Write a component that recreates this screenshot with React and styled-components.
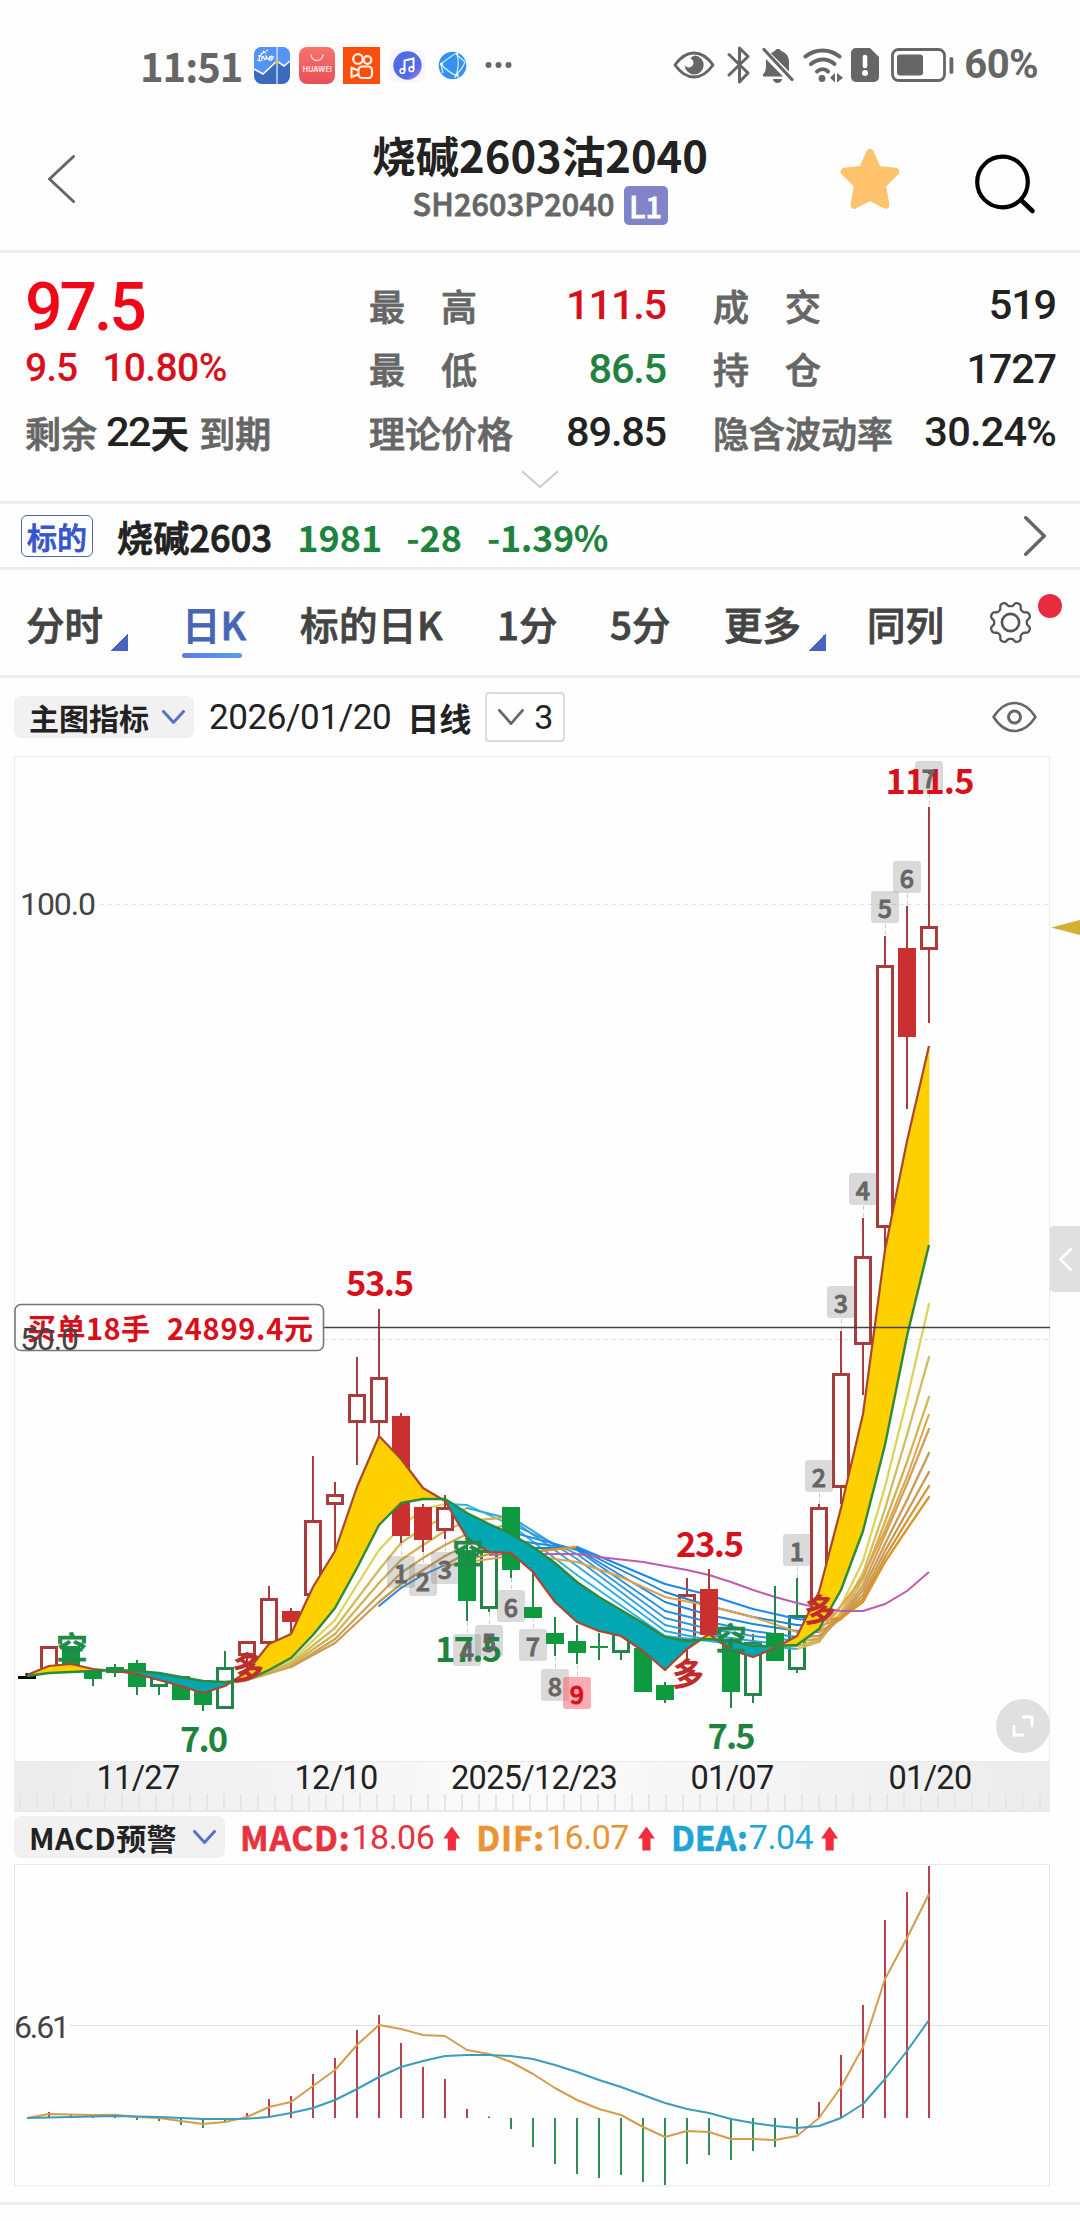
import React from "react";
import styled, { createGlobalStyle } from "styled-components";

const CJK = '"Noto Sans CJK SC", "Noto Sans", sans-serif';
const NUM = 'Roboto, "Noto Sans CJK SC", sans-serif';
const RED = "#d8101c";
const GREEN = "#1f8340";
const INK = "#222";
const GREY = "#666";
const RULE = "#ededed";

const Global = createGlobalStyle`
  * { box-sizing: border-box; }
  body { margin: 0; background: #fff; }
  svg { display: block; flex: none; }
`;

const Page = styled.div`
  width: 1080px;
  height: 2221px;
  overflow: hidden;
  background: #fefefe;
  color: ${INK};
  font-family: ${CJK};
  display: flex;
  flex-direction: column;
`;

const Text = styled.span`
  font-family: ${(p) => (p.$num ? NUM : CJK)};
  font-size: ${(p) => p.$size}px;
  font-weight: ${(p) => p.$weight || 500};
  color: ${(p) => p.$color || INK};
  letter-spacing: ${(p) => p.$track || 0}px;
  margin-left: ${(p) => p.$left || 0}px;
  -webkit-text-stroke: ${(p) => p.$stroke ?? (p.$num || p.$weight ? 0 : 0.8)}px currentColor;
  line-height: 1;
  white-space: pre;
`;

/* ---------- status bar ---------- */
const StatusBar = styled.div`
  height: 130px;
  display: flex;
  align-items: center;
  justify-content: space-between;
  padding: 0 42px 0 140px;
  flex: none;
`;
const StatusGroup = styled.div`
  display: flex;
  align-items: center;
`;
const AppIcons = styled.div`
  display: flex;
  align-items: center;
  gap: 8.5px;
  margin-left: 12px;
  & > svg:last-child { margin-left: 5px; }
`;
const StatusIcons = styled.div`
  display: flex;
  align-items: center;
  margin-right: 10px;
  & > svg:nth-child(2) { margin-left: 12px; }
  & > svg:nth-child(3) { margin-left: 12px; }
  & > svg:nth-child(4) { margin-left: 9px; }
  & > svg:nth-child(5) { margin-left: 7px; }
  & > svg:nth-child(6) { margin-left: 12px; }
`;

/* ---------- header ---------- */
const Header = styled.header`
  height: 123px;
  flex: none;
  border-bottom: 3px solid ${RULE};
  display: grid;
  grid-template-columns: 320px 1fr 320px;
`;
const BackArea = styled.div`
  padding: 25px 0 0 48px;
`;
const Titles = styled.div`
  display: flex;
  flex-direction: column;
  align-items: center;
`;
const TitleLine = styled.div`
  height: 50px;
  display: flex;
  align-items: center;
`;
const SubLine = styled.div`
  height: 50px;
  display: flex;
  align-items: center;
  gap: 9px;
  & > span:first-child { margin-top: -4px; }
`;
const LevelBadge = styled.span`
  width: 44px;
  height: 39px;
  border-radius: 5px;
  background: #8184c8;
  display: flex;
  align-items: center;
  justify-content: center;
`;
const Actions = styled.div`
  display: flex;
  align-items: flex-start;
  justify-content: flex-end;
  padding: 18px 44px 0 0;
  gap: 73px;
`;

/* ---------- quote ---------- */
const Quote = styled.section`
  height: 251px;
  flex: none;
  border-bottom: 3px solid ${RULE};
  padding: 20px 24px 0 25px;
`;
const QuoteGrid = styled.div`
  display: grid;
  grid-template-columns: 344px 297px 390px;
  grid-template-rows: repeat(3, 63.5px);
`;
const Cell = styled.div`
  display: flex;
  align-items: center;
  justify-content: flex-start;
  padding-top: ${(p) => p.$top || 0}px;
`;
const Pair = styled(Cell)`
  justify-content: space-between;
  padding-left: ${(p) => p.$indent || 0}px;
`;
const MoreRow = styled.div`
  display: flex;
  justify-content: center;
  padding: 7px 1px 0 0;
`;

/* ---------- underlying ---------- */
const Underlying = styled.section`
  height: 66px;
  flex: none;
  border-bottom: 3px solid ${RULE};
  display: flex;
  align-items: center;
  padding: 0 34px 0 21px;
`;
const Tag = styled.span`
  width: 72px;
  height: 42px;
  border: 1.5px solid #4a67b0;
  border-radius: 6px;
  display: flex;
  align-items: center;
  justify-content: center;
`;
const Spacer = styled.div`
  flex: 1;
`;

/* ---------- tabs ---------- */
const Tabs = styled.nav`
  height: 108px;
  flex: none;
  border-bottom: 3px solid ${RULE};
  display: flex;
  align-items: flex-start;
  padding: 34px 18px 0 26px;
`;
const Tab = styled.div`
  width: ${(p) => p.$w}px;
  height: 54px;
  display: flex;
  flex-direction: column;
  align-items: flex-start;
  gap: 8px;
`;
const TabLine = styled.div`
  display: flex;
  align-items: flex-end;
  height: 46px;
  & > span { margin-bottom: 8px; }
`;
const Corner = styled.i`
  width: 18px;
  height: 18px;
  margin: 0 0 -1px 7px;
  background: linear-gradient(135deg, transparent 50%, #4864c0 50%);
`;
const Underline = styled.i`
  width: 60px;
  height: 6px;
  margin: -5px 0 0 0;
  border-radius: 3px;
  background: linear-gradient(90deg, #5b7ce8, #5a9cf2);
`;
const Settings = styled.div`
  display: flex;
  align-items: flex-start;
  margin-top: -3px;
`;
const Dot = styled.i`
  width: 24px;
  height: 24px;
  margin: -7px 0 0 6px;
  border-radius: 50%;
  background: #e82c40;
`;

/* ---------- chart toolbars ---------- */
const ChartBar = styled.div`
  height: 78px;
  flex: none;
  display: flex;
  align-items: center;
  padding: 0 43px 0 14px;
`;
const Pill = styled.div`
  width: ${(p) => p.$w}px;
  height: 42px;
  border-radius: 7px;
  background: #f1f1f1;
  display: flex;
  align-items: center;
  justify-content: space-between;
  padding: 0 9px 0 15px;
`;
const CountBox = styled.div`
  width: 80px;
  height: 50px;
  margin-left: 14px;
  border: 2px solid #dcdcdc;
  border-radius: 4px;
  display: flex;
  align-items: center;
  justify-content: space-between;
  padding: 0 10px 0 11px;
`;

/* ---------- chart ---------- */
const ChartWrap = styled.div`
  position: relative;
  height: 1006px;
  padding-left: 14px;
  flex: none;
`;
const SideHandle = styled.div`
  position: absolute;
  right: 0;
  top: 470px;
  width: 30px;
  height: 66px;
  border-radius: 4px 0 0 4px;
  background: #e0e0e0;
  display: flex;
  align-items: center;
  justify-content: center;
`;
const PriceMarker = styled.i`
  position: absolute;
  right: 0;
  top: 164px;
  width: 29px;
  height: 15px;
  background: #d1b034;
  clip-path: polygon(0 50%, 100% 0, 100% 100%);
`;
const ExpandButton = styled.div`
  position: absolute;
  right: 30px;
  top: 943px;
  width: 54px;
  height: 54px;
  border-radius: 50%;
  background: rgba(222, 222, 222, 0.95);
  display: flex;
  align-items: center;
  justify-content: center;
`;
const Axis = styled.div`
  width: 1036px;
  height: 50px;
  flex: none;
  margin-left: 14px;
  border-bottom: 2px solid #e8e8e8;
  background:
    repeating-linear-gradient(90deg, transparent 0 5px, #e6e6e6 5px 7px, transparent 7px 17px) 0 32px / 100% 16px no-repeat,
    linear-gradient(90deg, #ececec, #fbfbfb 50%, #ececec);
`;
const MacdBar = styled.div`
  height: 52px;
  flex: none;
  display: flex;
  align-items: center;
  padding: 0 14px 2px;
`;
const MacdWrap = styled.div`
  height: 341px;
  flex: none;
  padding-left: 14px;
  border-bottom: 3px solid ${RULE};
`;

/* ---------- icons ---------- */
const Chevron = ({ w, h, color, sw = 3, dir = "down" }) => {
  const p = sw / 2;
  const pts = {
    down: `${p},${p} ${w / 2},${h - p} ${w - p},${p}`,
    left: `${w - p},${p} ${p},${h / 2} ${w - p},${h - p}`,
    right: `${p},${p} ${w - p},${h / 2} ${p},${h - p}`,
  }[dir];
  return (
    <svg width={w} height={h}>
      <polyline points={pts} fill="none" stroke={color} strokeWidth={sw} strokeLinecap="round" strokeLinejoin="round" />
    </svg>
  );
};

const SinaIcon = () => (
  <svg width="36" height="37" viewBox="0 0 36 37">
    <rect width="36" height="37" rx="8" fill="#3a6bbd" />
    <path d="M0 8a8 8 0 0 1 8-8h20a8 8 0 0 1 8 8v6l-6 5-7-5-14 13-9-5z" fill="#5394f8" />
    <path d="M0 22l9 5 14-13 7 5 6-5" fill="none" stroke="#fff" strokeWidth="1.6" />
    <path d="M23 0v37" stroke="#e8eefb" strokeWidth="1.2" />
    <path d="M4 9l3-1-2 3 1 3-3-1M8 9v5M9 9l2 4M12 13V9l3 4 1-4M17 9v5M17 9c4 0 2 3 0 4M7 7l3-2M9 4l3 2M12 4l2-1" fill="none" stroke="#fff" strokeWidth="1.2" />
    <circle cx="23" cy="15" r="1.8" fill="#f0b050" />
  </svg>
);
const StoreIcon = () => (
  <svg width="36" height="37" viewBox="0 0 36 37">
    <defs>
      <linearGradient id="store" x1="0" y1="0" x2="0" y2="1">
        <stop offset="0" stopColor="#f9736c" />
        <stop offset="1" stopColor="#e64f57" />
      </linearGradient>
    </defs>
    <rect width="36" height="37" rx="8" fill="url(#store)" />
    <path d="M12 7.5a6 6 0 0 0 12 0" fill="none" stroke="#fff" strokeOpacity=".75" strokeWidth="1.4" />
    <text x="18.3" y="24.5" textAnchor="middle" textLength="29" fontFamily="Inter, sans-serif" fontWeight="700" fontSize="7" fill="#ffe4e2">HUAWEI</text>
  </svg>
);
const VideoIcon = () => (
  <svg width="37" height="37" viewBox="0 0 37 37">
    <rect width="37" height="37" fill="#fb4d0c" />
    <g fill="none" stroke="#fff3e6" strokeWidth="2.2" strokeLinejoin="round">
      <circle cx="15" cy="12" r="4.8" />
      <circle cx="24.5" cy="13" r="3.8" />
      <rect x="15.5" y="19.5" width="13.5" height="11.5" rx="3.6" />
      <path d="M15.500 23.500l-7-2.800v9.600l7-3" />
    </g>
  </svg>
);
const MusicIcon = () => (
  <svg width="37" height="37" viewBox="0 0 37 37">
    <defs>
      <linearGradient id="music" x1="0" y1="0" x2="1" y2="1">
        <stop offset="0" stopColor="#4a6be6" />
        <stop offset=".7" stopColor="#5a6ae4" />
        <stop offset="1" stopColor="#b58af4" />
      </linearGradient>
    </defs>
    <rect x="1" y="2" width="35" height="33" rx="7" fill="#f6f6fc" />
    <circle cx="18.5" cy="18.5" r="14.2" fill="url(#music)" />
    <path d="M15.5 24V13.500l9-2v10.500" fill="none" stroke="#fff" strokeWidth="2" />
    <circle cx="13.4" cy="24" r="2.3" fill="none" stroke="#fff" strokeWidth="1.6" />
    <circle cx="22.4" cy="22.2" r="2.3" fill="none" stroke="#fff" strokeWidth="1.6" />
  </svg>
);
const BrowserIcon = () => (
  <svg width="37" height="37" viewBox="0 0 37 37">
    <circle cx="18.5" cy="18.5" r="13.8" fill="#3591f0" />
    <g fill="none" stroke="#cdeeff" strokeWidth="1.3">
      <path d="M7 17C11 14 18 8 23 6M7 17c4 5 11 10 18 13M23 6c2 8 2 16-2 25M7 17l2 9M23 8l8 7M31 15c-2 6-5 9-9 13" />
    </g>
    <circle cx="7.5" cy="17" r="1.6" fill="#fff" />
    <circle cx="23" cy="27.5" r="1.6" fill="#fff" />
    <circle cx="23" cy="7" r="1.3" fill="#fff" />
  </svg>
);
const DotsIcon = () => (
  <svg width="27" height="8">
    {[3.5, 13.5, 23.5].map((x) => (
      <circle key={x} cx={x} cy="4" r="3" fill={GREY} />
    ))}
  </svg>
);

const EyeCareIcon = () => (
  <svg width="42" height="30" viewBox="0 0 42 30">
    <path d="M2 15C8 6.500 14.500 3 21 3s13 3.500 19 12c-6 8.500-12.500 12-19 12S8 23.500 2 15z" fill="none" stroke={GREY} strokeWidth="3" strokeLinejoin="round" />
    <path d="M22 5.500a9.500 9.500 0 1 1-10.300 9.500c2 3.600 7.600 3 8.600-1 .6-3-1-5-3-5.500a9 9 0 0 1 4.700-3z" fill={GREY} />
  </svg>
);
const BluetoothIcon = () => (
  <svg width="23" height="38" viewBox="0 0 23 38">
    <path d="M2 8.500l19 18.500-8.500 9V2l8.500 8.500L2 29" fill="none" stroke={GREY} strokeWidth="3" strokeLinejoin="round" strokeLinecap="round" />
  </svg>
);
const MuteIcon = () => (
  <svg width="32" height="36" viewBox="0 0 32 36">
    <path d="M4 12l17 17.500H1v-2c2.500-2.500 3-5 3-9z" fill={GREY} />
    <path d="M9 6.500C10.500 5 12 4.200 13 4c.3-2.600 5.700-2.600 6 0 4.500 1.300 8 5 8 10.500v10z" fill={GREY} />
    <path d="M2 2.500l28 30" stroke={GREY} strokeWidth="3.200" strokeLinecap="round" />
    <path d="M11 32h9a4.500 4 0 0 1-9 0z" fill={GREY} />
  </svg>
);
const WifiIcon = () => (
  <svg width="41" height="35" viewBox="0 0 41 35">
    <g fill="none" stroke={GREY} strokeWidth="4" strokeLinecap="round">
      <path d="M2.500 8.500c10-8 24-8 34 0" />
      <path d="M8 16c7.500-6 16.500-6 23.500 0" />
      <path d="M14 23.500c3.500-3 8-3 11 0" />
    </g>
    <circle cx="19" cy="30.500" r="3.400" fill={GREY} />
    <path d="M32 25v9.500l-5-4.700zM34 25v9.500l6-4.700z" fill={GREY} />
  </svg>
);
const SimIcon = () => (
  <svg width="28" height="34" viewBox="0 0 28 34">
    <path d="M5 0h14l9 9v20a5 5 0 0 1-5 5H5a5 5 0 0 1-5-5V5a5 5 0 0 1 5-5z" fill={GREY} />
    <path d="M14 9v9" stroke="#fff" strokeWidth="4.600" strokeLinecap="round" />
    <circle cx="14" cy="25" r="3" fill="#fff" />
  </svg>
);
const BatteryIcon = () => (
  <svg width="63" height="34" viewBox="0 0 63 34">
    <rect x="1.500" y="1.500" width="52" height="31" rx="6" fill="none" stroke={GREY} strokeWidth="2.800" />
    <rect x="6" y="6.500" width="26" height="21" rx="3" fill={GREY} />
    <rect x="58.500" y="9" width="3.800" height="17" rx="1.900" fill={GREY} />
  </svg>
);
const StarIcon = () => (
  <svg width="62" height="62" viewBox="0 0 62 62">
    <path d="M31 5l7.300 16.600 18 2.100-13.300 13.100 3.400 20L31 48.700 15.600 56.800l3.400-20L5.700 23.700l18-2.100z" fill="#ffc26d" stroke="#ffc26d" strokeWidth="8" strokeLinejoin="round" />
  </svg>
);
const SearchIcon = () => (
  <svg width="62" height="68" viewBox="0 0 62 68">
    <circle cx="28.500" cy="34" r="25.300" fill="none" stroke="#000" strokeWidth="4.200" />
    <path d="M47 52l11.500 11" stroke="#000" strokeWidth="4.600" strokeLinecap="round" />
  </svg>
);
const GearIcon = () => {
  const pts = [];
  for (let a = 0; a < 360; a += 3) {
    const r = 18.4 + 2.2 * Math.tanh(1.8 * Math.cos(((a - 22.5) * 8 * Math.PI) / 180));
    const t = (a * Math.PI) / 180;
    pts.push(`${(21.5 + r * Math.cos(t)).toFixed(2)},${(21.5 + r * Math.sin(t)).toFixed(2)}`);
  }
  return (
    <svg width="43" height="43" overflow="visible">
      <polygon points={pts.join(" ")} fill="none" stroke="#555" strokeWidth="2.300" strokeLinejoin="round" />
      <circle cx="21.500" cy="21.500" r="8.600" fill="none" stroke="#555" strokeWidth="2.600" />
    </svg>
  );
};
const EyeIcon = () => (
  <svg width="45" height="32" viewBox="0 0 45 32">
    <path d="M1.500 16C8 6 15 2 22.500 2S37 6 43.500 16C37 26 30 30 22.500 30S8 26 1.500 16z" fill="none" stroke={GREY} strokeWidth="2.500" strokeLinejoin="round" />
    <circle cx="22.500" cy="16" r="6" fill="none" stroke={GREY} strokeWidth="3" />
  </svg>
);
const ExpandIcon = () => (
  <svg width="22" height="22" viewBox="0 0 22 22">
    <path d="M10 2h10v10M2 10v10h10" fill="none" stroke="#fff" strokeWidth="2.800" />
  </svg>
);
const UpArrow = styled.i`
  width: 17px;
  height: 24px;
  margin: 3px 0 0 ${(p) => p.$left}px;
  background: #f32b3c;
  clip-path: polygon(50% 0, 100% 50%, 74% 50%, 74% 100%, 26% 100%, 26% 50%, 0 50%);
`;

/* ---------- chart data ---------- */
const X = (i) => 27 + 22 * i;

// [index, kind, high, top, bottom, low]; r/g = colour, f = filled, h = hollow
const CANDLES = [
  [1, "rh", 1646, 1646, 1672, 1672],
  [2, "gf", 1646, 1646, 1673, 1673],
  [3, "gf", 1670, 1670, 1679, 1686],
  [4, "gf", 1664, 1667, 1673, 1677],
  [5, "gf", 1660, 1663, 1687, 1695],
  [6, "gh", 1677, 1677, 1687, 1695],
  [7, "gf", 1676, 1676, 1700, 1700],
  [8, "gf", 1683, 1683, 1705, 1711],
  [9, "gh", 1651, 1667, 1709, 1709],
  [10, "rh", 1641, 1641, 1656, 1673],
  [11, "rh", 1586, 1598, 1644, 1644],
  [12, "rf", 1608, 1611, 1622, 1633],
  [13, "rh", 1456, 1520, 1596, 1596],
  [14, "rh", 1482, 1494, 1505, 1550],
  [15, "rh", 1357, 1394, 1423, 1465],
  [16, "rh", 1309, 1377, 1423, 1437],
  [17, "rf", 1413, 1416, 1536, 1543],
  [18, "rf", 1504, 1507, 1540, 1552],
  [19, "rh", 1495, 1507, 1531, 1539],
  [20, "gf", 1534, 1550, 1601, 1621],
  [21, "gh", 1550, 1550, 1609, 1612],
  [22, "gf", 1507, 1507, 1570, 1578],
  [23, "gf", 1572, 1607, 1618, 1618],
  [24, "gf", 1617, 1633, 1644, 1656],
  [25, "gf", 1625, 1641, 1653, 1664],
  [26, "gf", 1633, 1646, 1648, 1660],
  [27, "gh", 1630, 1630, 1653, 1660],
  [28, "gf", 1648, 1648, 1692, 1692],
  [29, "gf", 1682, 1685, 1700, 1703],
  [30, "rh", 1578, 1594, 1641, 1660],
  [31, "rf", 1569, 1589, 1635, 1635],
  [32, "gf", 1638, 1640, 1692, 1708],
  [33, "gh", 1634, 1642, 1696, 1703],
  [34, "gf", 1586, 1633, 1661, 1661],
  [35, "gh", 1578, 1615, 1670, 1673],
  [36, "rh", 1504, 1507, 1610, 1610],
  [37, "rh", 1331, 1373, 1488, 1504],
  [38, "rh", 1218, 1256, 1345, 1395],
  [39, "rh", 936, 965, 1228, 1248],
  [40, "rf", 906, 948, 1037, 1109],
  [41, "rh", 807, 926, 950, 1023],
];
const FAST = [1675, 1666, 1664, 1669, 1671, 1674, 1680, 1686, 1693, 1686, 1672, 1644, 1634, 1587, 1551, 1487, 1436, 1459, 1488, 1501, 1538, 1552, 1553, 1572, 1602, 1622, 1631, 1636, 1651, 1670, 1649, 1634, 1650, 1657, 1648, 1636, 1592, 1508, 1414, 1250, 1141, 1046];
const SLOW = [1676, 1673, 1672, 1671, 1670, 1671, 1673, 1677, 1681, 1682, 1680, 1670, 1658, 1635, 1608, 1568, 1525, 1503, 1499, 1499, 1513, 1524, 1534, 1547, 1563, 1582, 1597, 1610, 1623, 1637, 1641, 1639, 1641, 1646, 1646, 1645, 1629, 1590, 1531, 1445, 1336, 1245];

// indices shared by the fan of slower averages
const KEYS = [10, 12, 14, 16, 17, 18, 19, 20, 22, 25, 29, 31, 33, 35, 36, 37, 38, 39, 40, 41];
const FAN = [
  [1680, 1661, 1620, 1550, 1527, 1509, 1504, 1505, 1525, 1575, 1636, 1641, 1647, 1646, 1640, 1606, 1561, 1487, 1399, 1304],
  [1680, 1663, 1628, 1570, 1543, 1528, 1517, 1508, 1519, 1566, 1631, 1640, 1645, 1649, 1642, 1612, 1573, 1509, 1435, 1357],
  [1680, 1665, 1634, 1583, 1560, 1545, 1531, 1521, 1517, 1559, 1625, 1635, 1641, 1646, 1641, 1615, 1579, 1522, 1462, 1397],
  [1680, 1667, 1639, 1595, 1573, 1558, 1545, 1534, 1524, 1554, 1618, 1629, 1636, 1641, 1639, 1617, 1585, 1535, 1484, 1429],
  [null, 1667, 1643, 1602, 1584, 1570, 1556, 1545, 1532, 1550, 1611, 1622, 1631, 1637, 1636, 1618, 1590, 1544, 1500, 1453],
  [null, null, null, 1606, 1588, 1575, 1565, 1553, 1540, 1549, 1602, 1615, 1624, 1631, 1632, 1619, 1595, 1551, 1512, 1472],
  [null, null, null, null, null, null, 1567, 1560, 1548, 1548, 1592, 1606, 1617, 1625, 1626, 1619, 1599, 1557, 1521, 1486],
  [null, null, null, null, null, null, null, null, 1554, 1547, 1584, 1595, 1609, 1619, 1621, 1618, 1602, 1562, 1529, 1497],
];
const WARM = ["#dcd45a", "#d4bb5c", "#d2b350", "#cfa357", "#c99c55", "#c99a4c", "#cf9638", "#dd9428"];
const COOL = ["#2bb4dc", "#2cabdc", "#34a2da", "#3499d6", "#2590e0", "#2088de", "#1f80d4", "#1a88ee"];
const ORANGE = [[20, 1562], [22, 1556], [23, 1556], [25, 1562], [27, 1577], [29, 1597], [31, 1606], [33, 1617], [35, 1632], [36, 1631], [37, 1606], [38, 1577], [39, 1530], [40, 1477], [41, 1414]];
const LONG = [[21, 1555], [22, 1554], [25, 1554], [26, 1557], [28, 1562], [29, 1566], [30, 1570], [31, 1575], [32, 1582], [33, 1590], [34, 1597], [35, 1603], [36, 1608], [37, 1611], [38, 1611], [39, 1604], [40, 1591], [41, 1572]];

const BADGES = [
  [17, 1556, 1], [18, 1564, 2], [19, 1552, 3], [20, 1634, 4], [21, 1625, 5], [22, 1590, 6], [23, 1629, 7], [24, 1669, 8], [25, 1677, 9],
  [35, 1534, 1], [36, 1460, 2], [37, 1286, 3], [38, 1173, 4], [39, 891, 5], [40, 861, 6], [41, 761, 7],
];
const PEAKS = [
  [380, 1296, "53.5", 66, RED], [204, 1752, "7.0", 46, GREEN], [468.5, 1662, "17.5", 65, GREEN],
  [710, 1557, "23.5", 66, RED], [731.5, 1749, "7.5", 46, GREEN], [930, 794, "111.5", 87, RED],
];
const SIGNALS = [
  [72, 1659, "空"], [468, 1564, "空"], [731, 1650, "空"], [248, 1679, "多"], [688, 1685, "多"], [820, 1621, "多"],
];

const poly = (arr) => arr.map((y, i) => `${X(i)},${y}`).join(" ");

function Ribbon() {
  const out = [];
  for (let i = 0; i < FAST.length - 1; i++) {
    const a = FAST[i] - SLOW[i];
    const b = FAST[i + 1] - SLOW[i + 1];
    const color = (d) => (d < 0 ? "#ffd000" : "#02a7b2");
    if (a * b < 0) {
      const t = a / (a - b);
      const cx = X(i) + 22 * t;
      const cy = FAST[i] + (FAST[i + 1] - FAST[i]) * t;
      out.push([`${X(i)},${FAST[i]} ${cx},${cy} ${X(i)},${SLOW[i]}`, color(a)]);
      out.push([`${X(i + 1)},${FAST[i + 1]} ${cx},${cy} ${X(i + 1)},${SLOW[i + 1]}`, color(b)]);
    } else {
      out.push([`${X(i)},${FAST[i]} ${X(i + 1)},${FAST[i + 1]} ${X(i + 1)},${SLOW[i + 1]} ${X(i)},${SLOW[i]}`, color(a + b)]);
    }
  }
  return out.map(([p, c], k) => <polygon key={k} points={p} fill={c} stroke={c} strokeWidth="0.600" />);
}

function Fan() {
  const out = [];
  FAN.forEach((row, n) => {
    for (let k = 0; k < KEYS.length - 1; k++) {
      if (row[k] == null || row[k + 1] == null) continue;
      const rising = row[k + 1] < row[k] && !(n === 5 && k < 6);
      out.push(
        <line key={`${n}-${k}`} x1={X(KEYS[k])} y1={row[k]} x2={X(KEYS[k + 1])} y2={row[k + 1]}
          stroke={rising ? WARM[n] : COOL[n]} strokeWidth={rising ? 2.3 : 1.9} strokeLinecap="round" />
      );
    }
  });
  return out;
}

function Candle({ d: [i, kind, high, top, bottom, low] }) {
  const x = X(i);
  const red = kind[0] === "r";
  const line = red ? "#a83c3c" : "#22864a";
  const fill = red ? "#cb3030" : "#109a40";
  return (
    <g>
      {high < top && <line x1={x} x2={x} y1={high} y2={top} stroke={line} strokeWidth="2" />}
      {low > bottom && <line x1={x} x2={x} y1={bottom} y2={low} stroke={line} strokeWidth="2" />}
      {kind[1] === "f" ? (
        <rect x={x - 9} y={top} width="18" height={bottom - top} fill={fill} />
      ) : (
        <rect x={x - 7.5} y={top + 1.5} width="15" height={bottom - top - 3} fill="#fefefe" stroke={line} strokeWidth="3" />
      )}
    </g>
  );
}

function KChart() {
  return (
    <svg width="1036" height="1006" viewBox="14 756 1036 1006">
      <rect x="14.500" y="756.500" width="1035" height="1005" fill="none" stroke="#ebebeb" />
      <path d="M100 904.500H1049M324 1339.500H1049" stroke="#e2e2e2" strokeDasharray="4 4" />
      <g stroke="#ccc" strokeDasharray="4 3">
        {BADGES.map(([i, y]) => {
          const up = i > 30;
          return <line key={i} x1={X(i) + 0.5} x2={X(i) + 0.5} y1={up ? y + 33 : y - 12} y2={up ? y + 46 : y} />;
        })}
      </g>
      {CANDLES.filter((d) => ![17, 18, 19].includes(d[0])).map((d) => <Candle key={d[0]} d={d} />)}
      <Fan />
      <polyline points={ORANGE.map(([i, y]) => `${X(i)},${y}`).join(" ")} fill="none" stroke="#e0a04c" strokeWidth="2" />
      <polyline points={LONG.map(([i, y]) => `${X(i)},${y}`).join(" ")} fill="none" stroke="#c05cae" strokeWidth="2" />
      {CANDLES.filter((d) => d[1][1] === "f" || [17, 18, 19].includes(d[0])).map((d) => <Candle key={d[0]} d={d} />)}
      <path d="M18 1677.500H36M27 1673v5" stroke="#000" strokeWidth="3" />
      <Ribbon />
      <polyline points={poly(FAST)} fill="none" stroke="#ac4630" strokeWidth="2.200" strokeLinejoin="round" />
      <polyline points={poly(SLOW)} fill="none" stroke="#2c8a3a" strokeWidth="2.400" strokeLinejoin="round" />
      {BADGES.map(([i, y, n]) => (
        <rect key={i} x={X(i) - 14} y={y} width="28" height="32" rx="3" fill={n === 9 ? "#ff4856" : "#6e6e6e"} fillOpacity={n === 9 ? 0.45 : 0.25} />
      ))}
      <path d="M324 1327.500H1050" stroke="#444" strokeWidth="1.500" />
      <rect x="15" y="1304.500" width="308.500" height="46" rx="6" fill="#fefefe" stroke="#777" strokeWidth="1.600" />
      <g fontFamily={CJK} fontWeight="700" fontSize="29" fill={RED}>
        <text x="27" y="1340" textLength="123">买单18手</text>
        <text x="167" y="1340" textLength="146">24899.4元</text>
      </g>
      <g fontFamily={NUM} fontSize="32" fill="#444">
        <text x="20" y="1350" textLength="59">50.0</text>
        <text x="20" y="915" textLength="76">100.0</text>
      </g>
      <g fontFamily={CJK} fontWeight="700" fontSize="34.500" textAnchor="middle">
        {PEAKS.map(([x, y, t, w, c]) => (
          <text key={t} x={x} y={y} textLength={w + 2} fill={c}>{t}</text>
        ))}
      </g>
      <g fontFamily={CJK} fontWeight="500" fontSize="25" textAnchor="middle" strokeWidth="0.900">
        {BADGES.map(([i, y, n]) => {
          const c = n === 9 ? RED : "#666";
          return <text key={i} x={X(i)} y={y + 27} fill={c} stroke={c}>{n}</text>;
        })}
      </g>
      <g fontFamily={CJK} fontWeight="500" fontSize="31" textAnchor="middle" strokeWidth="1.100">
        {SIGNALS.map(([x, y, t]) => {
          const c = t === "空" ? "#1f8a4a" : "#c02c2c";
          return <text key={x} x={x} y={y} fill={c} stroke={c}>{t}</text>;
        })}
      </g>
    </svg>
  );
}

const HIST = [2118, 2112, 2114, 2117, 2115, 2120, 2121, 2125, 2128, 2122, 2113, 2099, 2096, 2074, 2058, 2030, 2015, 2043, 2067, 2079, 2109, 2116.5, 2129, 2147, 2164, 2174, 2178, 2175, 2182, 2185, 2164, 2155, 2160, 2151, 2147, 2134, 2102, 2055, 2005, 1920, 1892, 1866];
const DIF = [2118, 2114, 2114.5, 2115, 2114.7, 2117, 2118, 2121, 2124, 2122, 2117, 2107, 2102, 2086, 2070, 2045, 2025, 2029, 2035, 2036, 2050, 2054, 2062, 2074, 2088, 2100, 2109, 2115, 2127, 2137, 2131, 2132, 2139, 2139, 2140, 2136, 2118, 2087, 2047, 1979, 1938, 1894];
const DEA = [2118, 2117.5, 2117, 2116.5, 2116, 2116.5, 2117, 2118, 2119, 2119, 2118.7, 2117, 2113, 2108, 2100, 2089, 2077, 2067, 2061, 2056, 2055, 2055, 2056, 2059, 2065, 2072, 2080, 2087, 2095, 2103, 2109, 2113, 2119, 2123, 2126, 2128, 2126, 2118, 2104, 2079, 2051, 2020];

function MacdChart() {
  return (
    <svg width="1036" height="323" viewBox="14 1864 1036 323">
      <rect x="14.500" y="1864.500" width="1035" height="321.500" fill="none" stroke="#e6e6e6" />
      <path d="M70 2025.500H1049" stroke="#dde3e3" />
      {HIST.map((y, i) => (
        <line key={i} x1={X(i)} x2={X(i)} y1="2118" y2={y} stroke={y < 2118 ? "#b8424a" : "#2f8f56"} strokeWidth="2" />
      ))}
      <polyline points={poly(DIF)} fill="none" stroke="#d69c4e" strokeWidth="2" strokeLinejoin="round" />
      <polyline points={poly(DEA)} fill="none" stroke="#3a9dba" strokeWidth="2" strokeLinejoin="round" />
      <text x="14" y="2038" textLength="56" fontFamily={NUM} fontSize="32" fill="#444">6.61</text>
    </svg>
  );
}

const DateRow = styled.div`
  display: grid;
  grid-template-columns: repeat(5, 198px);
  padding: 0 0 0 25px;
  height: 31px;
  justify-items: center;
  align-items: center;
`;

function Figure({ name, value, color, left, numLeft, arrow, track }) {
  return (
    <>
      <Text $size={33.5} $weight={700} $stroke={0.6} $color={color} $left={left} $track={track}>{name}</Text>
      <Text $num $size={34} $weight={400} $color={color} $left={numLeft} $track={-0.5}>{value}</Text>
      <UpArrow $left={arrow} />
    </>
  );
}

export default function App() {
  return (
    <Page>
      <Global />
      <StatusBar>
        <StatusGroup>
          <Text $size={40} $weight={700} $color={GREY} $track={-1}>11:51</Text>
          <AppIcons>
            <SinaIcon />
            <StoreIcon />
            <VideoIcon />
            <MusicIcon />
            <BrowserIcon />
            <DotsIcon />
          </AppIcons>
        </StatusGroup>
        <StatusGroup>
          <StatusIcons>
            <EyeCareIcon />
            <BluetoothIcon />
            <MuteIcon />
            <WifiIcon />
            <SimIcon />
            <BatteryIcon />
          </StatusIcons>
          <Text $size={40} $weight={700} $color={GREY} $num $track={-0.6}>60%</Text>
        </StatusGroup>
      </StatusBar>

      <Header>
        <BackArea>
          <Chevron w={27} h={48} color={GREY} sw={3} dir="left" />
        </BackArea>
        <Titles>
          <TitleLine><Text $size={43.5} $weight={700}>烧碱2603沽2040</Text></TitleLine>
          <SubLine>
            <Text $size={30.5} $color={GREY} $track={0.2}>SH2603P2040</Text>
            <LevelBadge><Text $size={29} $color="#fff">L1</Text></LevelBadge>
          </SubLine>
        </Titles>
        <Actions>
          <StarIcon />
          <SearchIcon />
        </Actions>
      </Header>

      <Quote>
        <QuoteGrid>
          <Cell $top={6}><Text $num $size={66} $color="#f00818" $track={-3}>97.5</Text></Cell>
          <Pair><Text $size={36} $color={GREY}>最　高</Text><Text $num $size={41.5} $color={RED} $track={-1.2}>111.5</Text></Pair>
          <Pair $indent={47}><Text $size={36} $color={GREY}>成　交</Text><Text $num $size={41.5} $track={-1.2}>519</Text></Pair>
          <Cell>
            <Text $num $size={39} $color={RED} $track={-1}>9.5</Text>
            <Text $num $size={39} $color={RED} $left={25} $track={-0.6}>10.80%</Text>
          </Cell>
          <Pair><Text $size={36} $color={GREY}>最　低</Text><Text $num $size={41.5} $color={GREEN} $track={-1.2}>86.5</Text></Pair>
          <Pair $indent={47}><Text $size={36} $color={GREY}>持　仓</Text><Text $num $size={41.5} $track={-1.2}>1727</Text></Pair>
          <Cell>
            <Text $size={36} $color={GREY}>剩余</Text>
            <Text $num $size={41.5} $left={9} $track={-1.5}>22</Text>
            <Text $size={39} $weight={700}>天</Text>
            <Text $size={36} $color={GREY} $left={10}>到期</Text>
          </Cell>
          <Pair><Text $size={36} $color={GREY}>理论价格</Text><Text $num $size={41.5} $track={-1.2}>89.85</Text></Pair>
          <Pair $indent={47}><Text $size={36} $color={GREY}>隐含波动率</Text><Text $num $size={41.5} $track={-0.8}>30.24%</Text></Pair>
        </QuoteGrid>
        <MoreRow><Chevron w={36} h={17} color="#ccc" sw={2} /></MoreRow>
      </Quote>

      <Underlying>
        <Tag><Text $size={30} $color="#3556cc">标的</Text></Tag>
        <Text $size={36} $stroke={1} $left={24} $track={0.2}>烧碱2603</Text>
        <Text $size={36} $weight={700} $color={GREEN} $left={25}>1981</Text>
        <Text $size={36} $weight={700} $color={GREEN} $left={24}>-28</Text>
        <Text $size={36} $weight={700} $color={GREEN} $left={25} $track={-0.4}>-1.39%</Text>
        <Spacer />
        <Chevron w={22} h={40} color={GREY} sw={3.5} dir="right" />
      </Underlying>

      <Tabs>
        <Tab $w={156}><TabLine><Text $size={38.5} $color="#444">分时</Text><Corner /></TabLine></Tab>
        <Tab $w={118}><TabLine><Text $size={38.5} $color="#4864b4">日K</Text></TabLine><Underline /></Tab>
        <Tab $w={197}><TabLine><Text $size={38.5} $color="#444" $track={0.5}>标的日K</Text></TabLine></Tab>
        <Tab $w={113}><TabLine><Text $size={38.5} $color="#444">1分</Text></TabLine></Tab>
        <Tab $w={114}><TabLine><Text $size={38.5} $color="#444">5分</Text></TabLine></Tab>
        <Tab $w={143}><TabLine><Text $size={38.5} $color="#444">更多</Text><Corner /></TabLine></Tab>
        <Tab $w={122}><TabLine><Text $size={38.5} $color="#444">同列</Text></TabLine></Tab>
        <Settings><GearIcon /><Dot /></Settings>
      </Tabs>

      <ChartBar>
        <Pill $w={180}>
          <Text $size={30} $weight={700}>主图指标</Text>
          <Chevron w={23} h={14} color="#5a72c4" sw={3} />
        </Pill>
        <Text $num $size={35} $weight={400} $left={15} $track={-0.4}>2026/01/20</Text>
        <Text $size={32} $weight={700} $left={16}>日线</Text>
        <CountBox>
          <Chevron w={26} h={16} color={GREY} sw={2.8} />
          <Text $num $size={34} $weight={400}>3</Text>
        </CountBox>
        <Spacer />
        <EyeIcon />
      </ChartBar>

      <ChartWrap>
        <KChart />
        <PriceMarker />
        <SideHandle><Chevron w={13} h={23} color="#fff" sw={2.6} dir="left" /></SideHandle>
        <ExpandButton><ExpandIcon /></ExpandButton>
      </ChartWrap>
      <Axis>
        <DateRow>
          {["11/27", "12/10", "2025/12/23", "01/07", "01/20"].map((d) => (
            <Text key={d} $num $size={32.5} $weight={400} $track={-0.7}>{d}</Text>
          ))}
        </DateRow>
      </Axis>

      <MacdBar>
        <Pill $w={211}>
          <Text $size={30} $weight={700} $track={0.4}>MACD预警</Text>
          <Chevron w={23} h={14} color="#5a72c4" sw={3} />
        </Pill>
        <Figure name="MACD:" value="18.06" color="#e8323e" left={15} numLeft={1} arrow={9} track={0.8} />
        <Figure name="DIF:" value="16.07" color="#ea9434" left={16} numLeft={1} arrow={9} track={0.8} />
        <Figure name="DEA:" value="7.04" color="#20a4d4" left={16} numLeft={1} arrow={8} />
      </MacdBar>
      <MacdWrap>
        <MacdChart />
      </MacdWrap>
    </Page>
  );
}
